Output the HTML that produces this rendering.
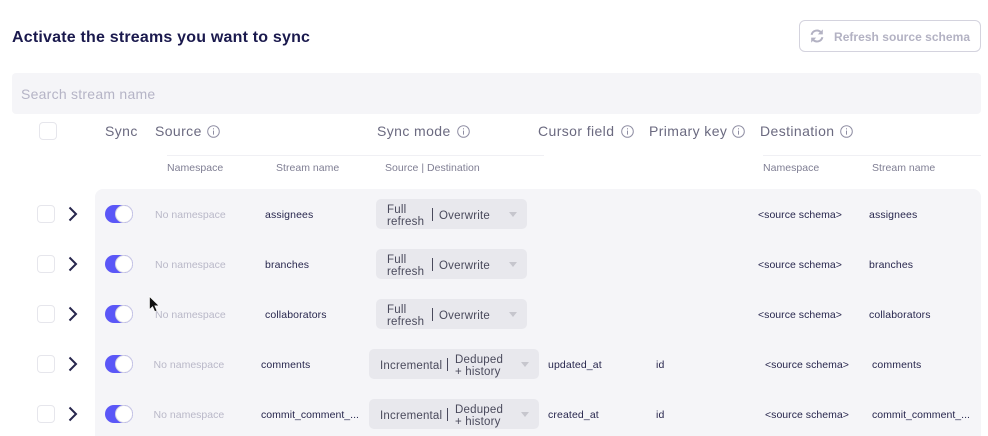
<!DOCTYPE html>
<html><head><meta charset="utf-8">
<style>
html,body{margin:0;padding:0;background:#fff;width:988px;height:436px;overflow:hidden}
body{position:relative;font-family:"Liberation Sans",sans-serif}
.a,.t,.h,.s,.n,.v,.o,.cb,.sel,.tg,.ch,.ln,.dv,.ar{position:absolute}
.t,.h,.s,.n,.v,.o{white-space:nowrap;line-height:14px}
.h{font-size:14px;color:#6b6a80;letter-spacing:.4px;top:124px}
.s{font-size:10.5px;color:#7f7e93;letter-spacing:.02px;top:161px}
.n{font-size:10.5px;color:#b9b8c8;letter-spacing:.01px;margin-top:1px}
.v{font-size:10.5px;color:#27264d;letter-spacing:.12px;margin-top:1px}
.w{letter-spacing:.03px}
.o{font-size:11.5px;color:#4a4a5c;letter-spacing:.2px;line-height:12px;margin-top:1px}
.cb{width:16px;height:16px;border:1px solid #e6e6ec;border-radius:4px;background:#fff}
.sel{background:#e8e8ed;border-radius:5px;height:30px}
.tg{left:105px;width:28px;height:18px;border-radius:9px;background:#5b57f7;overflow:hidden}
.tg:after{content:"";position:absolute;left:10px;top:0;width:16px;height:16px;border:1px solid #d6d5e2;border-radius:50%;background:#fff}
.ch{left:67px;width:12px;height:16px}
.ln{height:1px;background:#f0f0f4}
.dv{width:1px;height:13px;background:#4a4a5c}
.ar{width:0;height:0;border-left:4.5px solid transparent;border-right:4.5px solid transparent;border-top:5px solid #c6c6cd}
svg{position:absolute;overflow:visible}
</style></head><body>

<div class="t" style="left:12px;top:29px;font-size:16px;line-height:18px;font-weight:bold;color:#1a194d;letter-spacing:.2px">Activate the streams you want to sync</div>

<div class="a" style="left:799px;top:20px;width:180px;height:30px;border:1px solid #d4d3de;border-radius:6px;background:#fff"></div>
<svg style="left:810px;top:29px" width="14" height="14" viewBox="0 0 14 14" fill="none" stroke="#b3b2c3" stroke-width="2"><path d="M1.6 5.8A5.4 5.4 0 0 1 11 3.4"/><path d="M12.4 8.2A5.4 5.4 0 0 1 3 10.6"/><path d="M12.8 .4V5.4H7.8z" fill="#b3b2c3" stroke="none"/><path d="M1.2 13.6V8.6H6.2z" fill="#b3b2c3" stroke="none"/></svg>
<div class="t" style="left:834px;top:30px;font-size:12px;font-weight:bold;color:#b3b2c3;letter-spacing:.03px">Refresh source schema</div>

<div class="a" style="left:12px;top:73px;width:969px;height:41px;background:#f5f5f8;border-radius:4px"></div>
<div class="t" style="left:21px;top:87px;font-size:14px;color:#b5b4c6;letter-spacing:.25px">Search stream name</div>

<div class="cb" style="left:39px;top:122px"></div>
<div class="h" style="left:105px">Sync</div>
<div class="h" style="left:155px">Source</div>
<div class="h" style="left:377px">Sync mode</div>
<div class="h" style="left:538px">Cursor field</div>
<div class="h" style="left:649px">Primary key</div>
<div class="h" style="left:760px">Destination</div>

<svg style="left:207px;top:125px" width="13" height="13" viewBox="0 0 13 13" fill="none" stroke="#8f8ea3"><circle cx="6.5" cy="6.5" r="5.8"/><path d="M6.5 5.6V9.6M6.5 3.2V4.4"/></svg>
<svg style="left:457px;top:125px" width="13" height="13" viewBox="0 0 13 13" fill="none" stroke="#8f8ea3"><circle cx="6.5" cy="6.5" r="5.8"/><path d="M6.5 5.6V9.6M6.5 3.2V4.4"/></svg>
<svg style="left:621px;top:125px" width="13" height="13" viewBox="0 0 13 13" fill="none" stroke="#8f8ea3"><circle cx="6.5" cy="6.5" r="5.8"/><path d="M6.5 5.6V9.6M6.5 3.2V4.4"/></svg>
<svg style="left:732px;top:125px" width="13" height="13" viewBox="0 0 13 13" fill="none" stroke="#8f8ea3"><circle cx="6.5" cy="6.5" r="5.8"/><path d="M6.5 5.6V9.6M6.5 3.2V4.4"/></svg>
<svg style="left:840px;top:125px" width="13" height="13" viewBox="0 0 13 13" fill="none" stroke="#8f8ea3"><circle cx="6.5" cy="6.5" r="5.8"/><path d="M6.5 5.6V9.6M6.5 3.2V4.4"/></svg>

<div class="ln" style="left:167px;top:155px;width:377px"></div>
<div class="ln" style="left:763px;top:155px;width:218px"></div>

<div class="s" style="left:167px">Namespace</div>
<div class="s" style="left:276px">Stream name</div>
<div class="s" style="left:385px">Source | Destination</div>
<div class="s" style="left:763px">Namespace</div>
<div class="s" style="left:872px">Stream name</div>

<div class="a" style="left:95px;top:189px;width:886px;height:260px;background:#f5f5f8;border-radius:8px"></div>

<!-- row 1 -->
<div class="cb" style="left:37px;top:205px"></div>
<svg class="ch" style="top:206px" viewBox="0 0 12 16" fill="none" stroke="#27264d" stroke-width="2"><path d="M2.5 1.5L9 8L2.5 14.5"/></svg>
<div class="tg" style="top:205px"></div>
<div class="n" style="left:155px;top:207px">No namespace</div>
<div class="v" style="left:265px;top:207px">assignees</div>
<div class="sel" style="left:376px;top:199px;width:151px"></div>
<div class="o" style="left:387px;top:203px">Full<br>refresh</div>
<div class="dv" style="left:432px;top:208px"></div>
<div class="o" style="left:439px;top:209px">Overwrite</div>
<div class="ar" style="left:509px;top:212px"></div>
<div class="v w" style="left:758px;top:207px">&lt;source schema&gt;</div>
<div class="v" style="left:869px;top:207px">assignees</div>

<!-- row 2 -->
<div class="cb" style="left:37px;top:255px"></div>
<svg class="ch" style="top:256px" viewBox="0 0 12 16" fill="none" stroke="#27264d" stroke-width="2"><path d="M2.5 1.5L9 8L2.5 14.5"/></svg>
<div class="tg" style="top:255px"></div>
<div class="n" style="left:155px;top:257px">No namespace</div>
<div class="v" style="left:265px;top:257px">branches</div>
<div class="sel" style="left:376px;top:249px;width:151px"></div>
<div class="o" style="left:387px;top:253px">Full<br>refresh</div>
<div class="dv" style="left:432px;top:258px"></div>
<div class="o" style="left:439px;top:259px">Overwrite</div>
<div class="ar" style="left:509px;top:262px"></div>
<div class="v w" style="left:758px;top:257px">&lt;source schema&gt;</div>
<div class="v" style="left:869px;top:257px">branches</div>

<!-- row 3 -->
<div class="cb" style="left:37px;top:305px"></div>
<svg class="ch" style="top:306px" viewBox="0 0 12 16" fill="none" stroke="#27264d" stroke-width="2"><path d="M2.5 1.5L9 8L2.5 14.5"/></svg>
<div class="tg" style="top:305px"></div>
<div class="n" style="left:155px;top:307px">No namespace</div>
<div class="v" style="left:265px;top:307px">collaborators</div>
<div class="sel" style="left:376px;top:299px;width:151px"></div>
<div class="o" style="left:387px;top:303px">Full<br>refresh</div>
<div class="dv" style="left:432px;top:308px"></div>
<div class="o" style="left:439px;top:309px">Overwrite</div>
<div class="ar" style="left:509px;top:312px"></div>
<div class="v w" style="left:758px;top:307px">&lt;source schema&gt;</div>
<div class="v" style="left:869px;top:307px">collaborators</div>

<!-- row 4 -->
<div class="cb" style="left:37px;top:355px"></div>
<svg class="ch" style="top:356px" viewBox="0 0 12 16" fill="none" stroke="#27264d" stroke-width="2"><path d="M2.5 1.5L9 8L2.5 14.5"/></svg>
<div class="tg" style="top:355px"></div>
<div class="n" style="left:153.5px;top:357px">No namespace</div>
<div class="v" style="left:261px;top:357px">comments</div>
<div class="sel" style="left:369px;top:349px;width:170px"></div>
<div class="o" style="left:380px;top:359px">Incremental</div>
<div class="dv" style="left:447px;top:358px"></div>
<div class="o" style="left:455px;top:353px">Deduped<br>+ history</div>
<div class="ar" style="left:521px;top:362px"></div>
<div class="v" style="left:548px;top:357px">updated_at</div>
<div class="v" style="left:656px;top:357px">id</div>
<div class="v w" style="left:765px;top:357px">&lt;source schema&gt;</div>
<div class="v" style="left:872px;top:357px">comments</div>

<!-- row 5 -->
<div class="cb" style="left:37px;top:405px"></div>
<svg class="ch" style="top:406px" viewBox="0 0 12 16" fill="none" stroke="#27264d" stroke-width="2"><path d="M2.5 1.5L9 8L2.5 14.5"/></svg>
<div class="tg" style="top:405px"></div>
<div class="n" style="left:153.5px;top:407px">No namespace</div>
<div class="v w" style="left:261px;top:407px">commit_comment_...</div>
<div class="sel" style="left:369px;top:399px;width:170px"></div>
<div class="o" style="left:380px;top:409px">Incremental</div>
<div class="dv" style="left:447px;top:408px"></div>
<div class="o" style="left:455px;top:403px">Deduped<br>+ history</div>
<div class="ar" style="left:521px;top:412px"></div>
<div class="v" style="left:548px;top:407px">created_at</div>
<div class="v" style="left:656px;top:407px">id</div>
<div class="v w" style="left:765px;top:407px">&lt;source schema&gt;</div>
<div class="v w" style="left:872px;top:407px">commit_comment_...</div>

<!-- mouse cursor -->
<svg style="left:149px;top:296px" width="11" height="18" viewBox="0 0 11 18"><path d="M0.5 0.5V13.5L3.6 10.6L5.8 15.6L8 14.6L5.8 9.8H10z" fill="#111" stroke="#fff" stroke-width=".6"/></svg>

</body></html>
